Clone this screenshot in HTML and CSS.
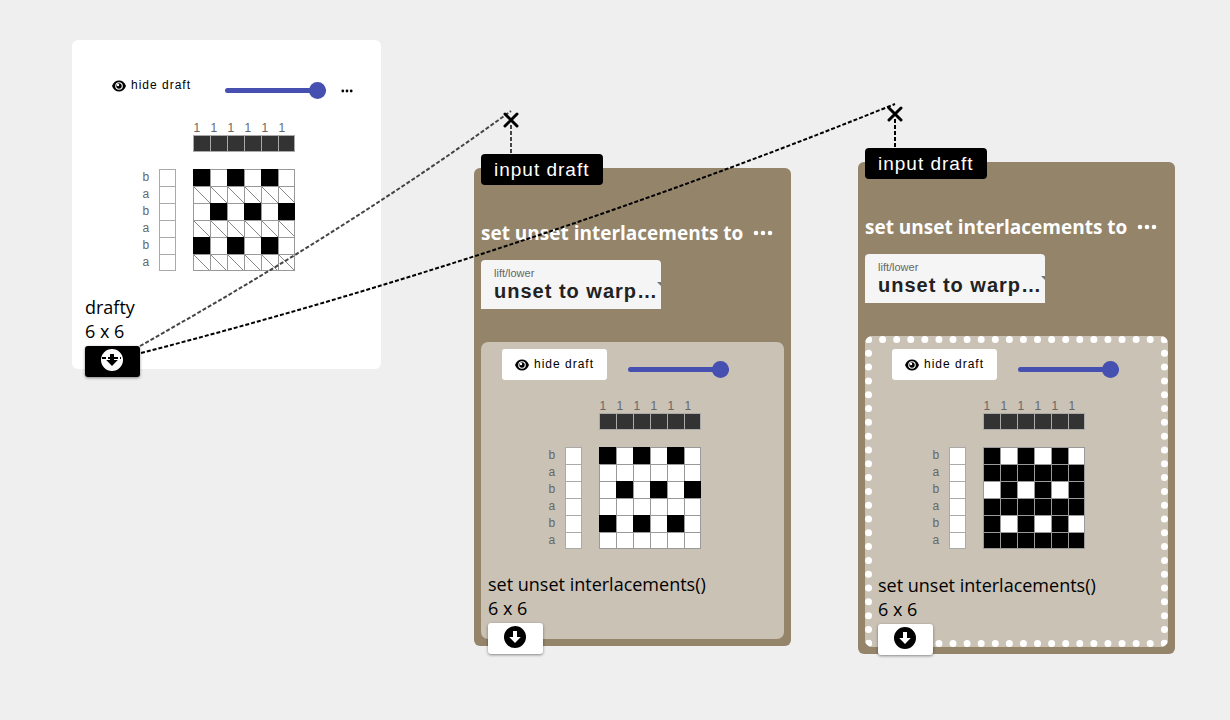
FILE: index.html
```
<!DOCTYPE html>
<html lang="en">
<head>
<meta charset="utf-8">
<title>Draft workspace</title>
<link rel="stylesheet" href="styles.css">
</head>
<body>
<svg class="defs" aria-hidden="true">
  <symbol id="eye" viewBox="0 0 14 12"><path d="M0 6C1.500 2.300 4 .5 7 .5S12.500 2.300 14 6c-1.500 3.700-4 5.500-7 5.500S1.500 9.700 0 6z"/><circle cx="7" cy="6" r="3.800" fill="#fff"/><circle cx="7" cy="6" r="2.700"/><circle cx="6" cy="5" r="1.200" fill="#fff"/></symbol>
  <symbol id="down" viewBox="0 0 22 22"><path fill-rule="evenodd" d="M11 0a11 11 0 1 1 0 22a11 11 0 0 1 0-22zM9 5v6H5.200L11 17l5.800-6H13V5z"/></symbol>
  <symbol id="dots" viewBox="0 0 20 6"><circle cx="3" cy="3" r="2.300"/><circle cx="10" cy="3" r="2.300"/><circle cx="17" cy="3" r="2.300"/></symbol>
  <symbol id="warp" viewBox="0 0 102 17"><path fill="#333" d="M0 0h102v17H0z"/><path fill="none" stroke="#aaa" d="M.5 0v17M17.500 0v17M34.500 0v17M51.500 0v17M68.500 0v17M85.500 0v17M101.500 0v17M0 .5h102M0 16.500h102"/></symbol>
  <symbol id="weft" viewBox="0 0 17 102"><path fill="#fff" d="M0 0h17v102H0z"/><path fill="none" stroke="#aaa" d="M.5 0v102M16.500 0v102M0 .5h17M0 17.500h17M0 34.500h17M0 51.500h17M0 68.500h17M0 85.500h17M0 101.500h17"/></symbol>
  <symbol id="lines" viewBox="0 0 102 102"><path fill="none" stroke="#999" d="M.5 0v102M17.500 0v102M34.500 0v102M51.500 0v102M68.500 0v102M85.500 0v102M101.500 0v102M0 .5h102M0 17.500h102M0 34.500h102M0 51.500h102M0 68.500h102M0 85.500h102M0 101.500h102"/></symbol>
</svg>

<main class="canvas">
  <section class="node source">
    <div class="draft-view">
      <div class="toolbar">
        <button class="hide-draft"><svg class="eye"><use href="#eye"/></svg>hide draft</button>
        <input class="zoom" type="range" min="0" max="100" value="100" aria-label="Draft scale">
        <button class="more" aria-label="More options"><svg class="dots"><use href="#dots"/></svg></button>
      </div>
      <div class="draft">
        <div class="threads"><span>1</span><span>1</span><span>1</span><span>1</span><span>1</span><span>1</span></div>
        <svg class="warp"><use href="#warp"/></svg>
        <div class="rows"><span>b</span><span>a</span><span>b</span><span>a</span><span>b</span><span>a</span></div>
        <svg class="weft"><use href="#weft"/></svg>
        <svg class="cloth" viewBox="0 0 102 102">
          <path fill="#fff" d="M0 0h102v102H0z"/>
          <path fill="none" stroke="#888" d="M0 17l17 17M17 17l17 17M34 17l17 17M51 17l17 17M68 17l17 17M85 17l17 17M0 51l17 17M17 51l17 17M34 51l17 17M51 51l17 17M68 51l17 17M85 51l17 17M0 85l17 17M17 85l17 17M34 85l17 17M51 85l17 17M68 85l17 17M85 85l17 17"/>
          <use href="#lines"/>
          <path d="M0 0h17v17H0zM34 0h17v17H34zM68 0h17v17H68zM17 34h17v17H17zM51 34h17v17H51zM85 34h17v17H85zM0 68h17v17H0zM34 68h17v17H34zM68 68h17v17H68z"/>
        </svg>
      </div>
      <p class="caption">drafty<br>6 x 6</p>
      <button class="outlet active" aria-label="Connect output"><svg class="down"><use href="#down"/></svg></button>
    </div>
  </section>

  <section class="node operation first">
    <button class="inlet">input draft</button>
    <header class="heading">
      <h2>set unset interlacements to</h2>
      <button class="more" aria-label="More options"><svg class="dots"><use href="#dots"/></svg></button>
    </header>
    <div class="field">
      <label for="lift-1">lift/lower</label>
      <select id="lift-1"><option>unset to warp…</option></select>
    </div>
    <div class="draft-view">
      <div class="toolbar">
        <button class="hide-draft"><svg class="eye"><use href="#eye"/></svg>hide draft</button>
        <input class="zoom" type="range" min="0" max="100" value="100" aria-label="Draft scale">
      </div>
      <div class="draft">
        <div class="threads"><span>1</span><span>1</span><span>1</span><span>1</span><span>1</span><span>1</span></div>
        <svg class="warp"><use href="#warp"/></svg>
        <div class="rows"><span>b</span><span>a</span><span>b</span><span>a</span><span>b</span><span>a</span></div>
        <svg class="weft"><use href="#weft"/></svg>
        <svg class="cloth" viewBox="0 0 102 102">
          <path fill="#fff" d="M0 0h102v102H0z"/>
          <use href="#lines"/>
          <path d="M0 0h17v17H0zM34 0h17v17H34zM68 0h17v17H68zM17 34h17v17H17zM51 34h17v17H51zM85 34h17v17H85zM0 68h17v17H0zM34 68h17v17H34zM68 68h17v17H68z"/>
        </svg>
      </div>
      <p class="caption">set unset interlacements()<br>6 x 6</p>
      <button class="outlet" aria-label="Connect output"><svg class="down"><use href="#down"/></svg></button>
    </div>
  </section>

  <section class="node operation second">
    <button class="inlet">input draft</button>
    <header class="heading">
      <h2>set unset interlacements to</h2>
      <button class="more" aria-label="More options"><svg class="dots"><use href="#dots"/></svg></button>
    </header>
    <div class="field">
      <label for="lift-2">lift/lower</label>
      <select id="lift-2"><option>unset to warp…</option></select>
    </div>
    <div class="draft-view selected">
      <div class="toolbar">
        <button class="hide-draft"><svg class="eye"><use href="#eye"/></svg>hide draft</button>
        <input class="zoom" type="range" min="0" max="100" value="100" aria-label="Draft scale">
      </div>
      <div class="draft">
        <div class="threads"><span>1</span><span>1</span><span>1</span><span>1</span><span>1</span><span>1</span></div>
        <svg class="warp"><use href="#warp"/></svg>
        <div class="rows"><span>b</span><span>a</span><span>b</span><span>a</span><span>b</span><span>a</span></div>
        <svg class="weft"><use href="#weft"/></svg>
        <svg class="cloth" viewBox="0 0 102 102">
          <path d="M0 0h102v102H0z"/>
          <path fill="#fff" d="M17 0h17v17H17zM51 0h17v17H51zM85 0h17v17H85zM0 34h17v17H0zM34 34h17v17H34zM68 34h17v17H68zM17 68h17v17H17zM51 68h17v17H51zM85 68h17v17H85z"/>
          <use href="#lines"/>
        </svg>
      </div>
      <p class="caption">set unset interlacements()<br>6 x 6</p>
      <button class="outlet" aria-label="Connect output"><svg class="down"><use href="#down"/></svg></button>
    </div>
  </section>

  <svg class="wires" aria-hidden="true">
    <path class="wire soft" d="M140 346Q350 228 511 111M511 125v29"/>
    <path class="wire" d="M141 353Q520 255 895 104M895 119v30M102 358h19"/>
    <path class="cut" d="M505 114l12 12M517 114l-12 12M889 108l12 12M901 108l-12 12"/>
  </svg>
</main>
</body>
</html>
```
FILE: styles.css
```
* { box-sizing: border-box; }
body { margin: 0; background: #efefef; color: #000; font-family: "Open Sans", "Noto Sans", sans-serif; }
button { border: 0; padding: 0; background: none; color: inherit; cursor: pointer; }
svg { display: block; fill: currentColor; }
.defs { position: absolute; width: 0; height: 0; }
.canvas { position: relative; min-height: 100vh; overflow: hidden; }

.node { position: absolute; border-radius: 6px; }
.source { left: 72px; top: 40px; width: 309px; background: #fff; }
.operation { width: 317px; padding: 0 7px 7px; background: #94846a; }
.first { left: 474px; top: 168px; }
.second { left: 858px; top: 162px; }

.inlet { display: block; height: 31px; margin-top: -14px; padding: 0 13px; border-radius: 4px; background: #000; color: #fff; font: 19px/31px "Liberation Sans", sans-serif; letter-spacing: 1px; }
.heading { display: flex; align-items: center; gap: 10px; height: 28px; margin-top: 34px; color: #fff; }
.heading h2 { margin: 0; font-size: 19px; line-height: 28px; font-weight: 700; white-space: nowrap; }
.dots { width: 20px; height: 6px; }

.field { display: flex; flex-direction: column; width: 180px; height: 49px; margin-top: 13px; padding: 7px 0 0 13px; border-radius: 4px 4px 0 0; background: #f5f5f5; position: relative; }
.field label { color: #666; font: 11px/12px "Liberation Sans", sans-serif; }
.field select { appearance: none; width: 100%; height: 24px; padding: 0; border: 0; background: none; color: #222; font: bold 20px/24px "Liberation Sans", sans-serif; letter-spacing: 1px; }
.field::after { content: ""; position: absolute; right: 0; top: 22px; border-top: 4px solid #777; border-left: 4px solid transparent; }

.draft-view { padding: 7px; border-radius: 7px; background: #cac2b5; }
.operation .draft-view { margin-top: 33px; }
.draft-view.selected { border: 7px dotted #fff; padding: 6px; }
.source .draft-view { padding: 30px 13px 7px; background: none; }

.toolbar { display: flex; align-items: flex-start; padding-left: 14px; }
.hide-draft { display: flex; align-items: center; gap: 5px; height: 31px; padding: 0 13px; border-radius: 3px; background: #fff; font: 12px/31px "Liberation Sans", sans-serif; letter-spacing: 1px; white-space: nowrap; }
.eye { width: 14px; height: 12px; }
.zoom { appearance: none; width: 101px; height: 18px; margin: 11px 0 0 21px; background: none; }
.zoom::-webkit-slider-runnable-track { height: 5px; border-radius: 3px; background: #4550b0; }
.zoom::-webkit-slider-thumb { appearance: none; width: 17px; height: 17px; margin-top: -6px; border-radius: 50%; background: #4550b0; }
.source .more { margin: 19px 0 0 15px; }
.source .dots { width: 12px; height: 4px; }

.draft { display: grid; grid-template-columns: 17px 17px 17px 102px 17px; grid-template-rows: 17px 17px 17px 102px; justify-content: center; margin-top: 17px; color: #666; font: 12px/17px "Liberation Sans", sans-serif; }
.operation .draft { margin-top: 16px; }
.threads { grid-area: 1 / 4; display: grid; grid-template-columns: repeat(6, 17px); padding-left: 1px; line-height: 20px; }
.warp { grid-area: 2 / 4; width: 102px; height: 17px; }
.rows { grid-area: 4 / 1; display: grid; grid-template-rows: repeat(6, 17px); padding-left: 1px; }
.weft { grid-area: 4 / 2; width: 17px; height: 102px; }
.cloth { grid-area: 4 / 4; width: 102px; height: 102px; color: #000; }

.caption { margin: 24px 0 0; font-size: 18px; line-height: 24px; white-space: nowrap; }
.first .caption { margin-top: 23px; }
.outlet { display: grid; place-items: center; width: 55px; height: 31px; margin: 3px 0 -22px; border-radius: 3px; background: #fff; box-shadow: 0 1px 3px rgba(0, 0, 0, .45); }
.selected .outlet { margin-bottom: -21px; }
.source .outlet { margin-bottom: -15px; }
.outlet.active { background: #000; color: #fff; }
.down { width: 22px; height: 22px; margin: -3px 2px 0 0; }

.wires { position: absolute; inset: 0; width: 100%; height: 100%; pointer-events: none; }
.wire { fill: none; stroke: #000; stroke-width: 2; stroke-dasharray: 4 2; }
.wire.soft { stroke: #444; }
.cut { fill: none; stroke: #000; stroke-width: 3; stroke-linecap: round; }
```
